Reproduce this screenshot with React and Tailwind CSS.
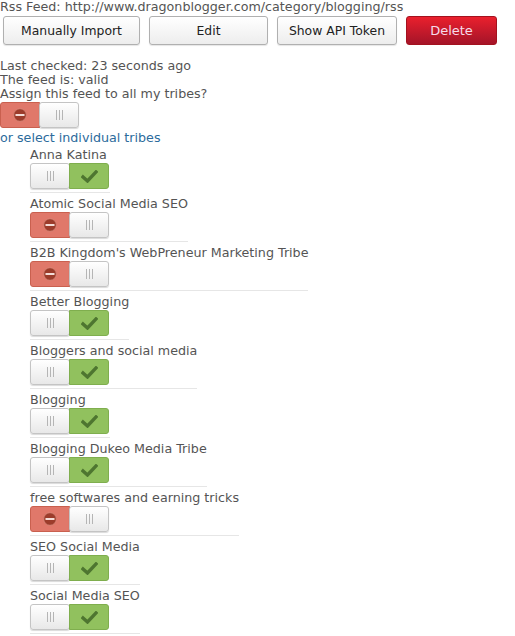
import React from 'react';

const tribes = [
  { name: 'Anna Katina', on: true },
  { name: 'Atomic Social Media SEO', on: false },
  { name: "B2B Kingdom's WebPreneur Marketing Tribe", on: false },
  { name: 'Better Blogging', on: true },
  { name: 'Bloggers and social media', on: true },
  { name: 'Blogging', on: true },
  { name: 'Blogging Dukeo Media Tribe', on: true },
  { name: 'free softwares and earning tricks', on: false },
  { name: 'SEO Social Media', on: true },
  { name: 'Social Media SEO', on: true },
];

const Grip = () => (
  <div className="flex gap-[2px]">
    <span className="w-px h-[10px] bg-[#b5b5b5]" />
    <span className="w-px h-[10px] bg-[#b5b5b5]" />
    <span className="w-px h-[10px] bg-[#b5b5b5]" />
  </div>
);

const Handle = () => (
  <div className="w-[40px] h-full flex items-center justify-center bg-gradient-to-b from-white to-[#e8e8e8] border border-[#c4c4c4] rounded-[3px] shadow-[0_1px_1px_rgba(0,0,0,0.15)]">
    <Grip />
  </div>
);

const Toggle = ({ on }) => (
  <div className="flex w-[80px] h-[26px] rounded-[3px] bg-white">
    {on ? (
      <>
        <Handle />
        <div className="w-[40px] h-full flex items-center justify-center bg-[#91c15e] border border-[#7fae4e] rounded-r-[3px] -ml-px">
          <svg width="17" height="13" viewBox="0 0 17 13">
            <path d="M2 7 L6.5 11 L15 2" fill="none" stroke="#4e7630" strokeWidth="3.4" strokeLinecap="square" />
          </svg>
        </div>
      </>
    ) : (
      <>
        <div className="w-[40px] h-full flex items-center justify-center bg-[#e0786a] border border-[#c9604f] rounded-l-[3px] -mr-px">
          <svg width="14" height="14" viewBox="0 0 14 14">
            <circle cx="7" cy="7" r="6.3" fill="#9c3c2b" stroke="#d88a7c" strokeWidth="0.8" />
            <rect x="2.5" y="6" width="9" height="2" fill="#f3ddd8" />
          </svg>
        </div>
        <Handle />
      </>
    )}
  </div>
);

const Button = ({ children, className }) => (
  <button className={`h-[29px] rounded-[3px] border border-[#b0b0b0] bg-gradient-to-b from-white to-[#ededed] text-[12.4px] text-[#222] shadow-[0_1px_1px_rgba(0,0,0,0.1)] ${className}`}>
    {children}
  </button>
);

export default function App() {
  return (
    <div className="w-[515px] min-h-[636px] bg-white text-[12.7px] leading-[14px] text-[#545454] font-['DejaVu_Sans',Verdana,sans-serif]">
      <div>Rss Feed: http://www.dragonblogger.com/category/blogging/rss</div>
      <div className="flex mt-[2px] pl-[3px] gap-[9px]">
        <Button className="w-[137px]">Manually Import</Button>
        <Button className="w-[119px]">Edit</Button>
        <Button className="w-[120px]">Show API Token</Button>
        <button className="w-[91px] h-[29px] rounded-[3px] border border-[#a3121f] bg-gradient-to-b from-[#ea202d] to-[#a51428] text-[13px] text-[#f6dcea]">
          Delete
        </button>
      </div>
      <div className="mt-[14px]">Last checked: 23 seconds ago</div>
      <div>The feed is: valid</div>
      <div>Assign this feed to all my tribes?</div>
      <div className="mt-[1px]">
        <Toggle on={false} />
      </div>
      <div className="mt-[3px] text-[#2c6b9c]">or select individual tribes</div>
      <div className="mt-[3px] pl-[30px] flex flex-col items-start">
        {tribes.map((t) => (
          <div key={t.name} className="min-w-[80px] pb-[3px] mb-[4px] border-b border-[#e6e6e6]">
            <div>{t.name}</div>
            <div className="mt-px">
              <Toggle on={t.on} />
            </div>
          </div>
        ))}
      </div>
    </div>
  );
}
